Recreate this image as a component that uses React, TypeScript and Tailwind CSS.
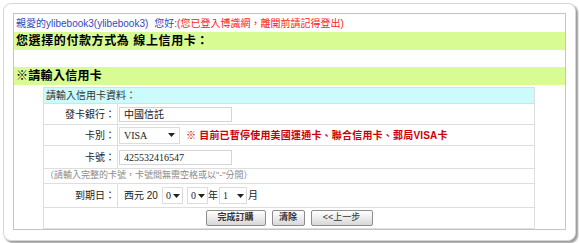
import React from 'react';

const font = { fontFamily: '"Liberation Sans", "Noto Sans CJK TC", sans-serif' };

function Arrow() {
  return (
    <svg width="7" height="4" viewBox="0 0 7 4" className="shrink-0">
      <path d="M0 0 H7 L3.5 4 Z" fill="#222" />
    </svg>
  );
}

function SmallSelect({ value, w }: { value: string; w: string }) {
  return (
    <div className={`${w} h-[17px] border border-[#dcdcdc] bg-white flex items-center justify-between pl-[3px] pr-[2px]`}>
      <span className="text-[10px] text-[#222] font-['Liberation_Serif',serif]">{value}</span>
      <Arrow />
    </div>
  );
}

function Row({ label, h, children }: { label: string; h: string; children: React.ReactNode }) {
  return (
    <div className={`flex ${h} border-b border-[#dedede]`}>
      <div className="w-[74px] shrink-0 flex items-center justify-end pr-[2px] border-r border-[#dedede] text-[10px] text-[#222]">
        {label}
      </div>
      <div className="flex-1 flex items-center pl-[1px]">{children}</div>
    </div>
  );
}

export default function App() {
  return (
    <div className="p-[3px] bg-white" style={font}>
      <div className="w-[573px] h-[238px] rounded-[8px] border border-[#d6d6d6] bg-white shadow-[2px_2px_2px_rgba(0,0,0,0.4)] p-[9px]">
        <div className="w-[553px] h-[217px] border border-[#c4c4c4]">
          <div className="h-[18px] flex items-center pl-[2px] text-[10px]">
            <span className="text-[#3448b8]">親愛的ylibebook3(ylibebook3)</span>
            <span className="text-[#3448b8] ml-[6px]">您好:</span>
            <span className="text-[#ff2020]">(您已登入博識網，離開前請記得登出)</span>
          </div>
          <div className="h-[18px] bg-[#d8fb94] flex items-center pl-[2px] text-[12px] font-bold tracking-[0.6px] text-black">
            您選擇的付款方式為 線上信用卡：
          </div>
          <div className="h-[17px]" />
          <div className="h-[18px] bg-[#d8fb94] flex items-center pl-[2px] text-[12px] font-bold tracking-[0.3px] text-black">
            ※請輸入信用卡
          </div>
          <div className="ml-[29px] mt-[2px] w-[492px] border-x border-t border-[#dedede]">
            <div className="h-[16px] bg-[#ccfbfb] border-b border-[#dedede] flex items-center pl-[2px] text-[10px] text-[#333]">
              請輸入信用卡資料：
            </div>
            <Row label="發卡銀行：" h="h-[21px]">
              <div className="w-[113px] h-[15px] border border-[#d4d4d4] flex items-center pl-[4px] text-[10px] text-[#222]">
                中國信託
              </div>
            </Row>
            <Row label="卡別：" h="h-[21px]">
              <div className="w-[61px] h-[17px] border border-[#dcdcdc] flex items-center justify-between pl-[4px] pr-[4px]">
                <span className="text-[10px] text-[#222] font-['Liberation_Serif',serif]">VISA</span>
                <Arrow />
              </div>
              <span className="ml-[6px] text-[10px] font-bold text-[#cc0000] tracking-[0.2px]">
                ※ 目前已暫停使用美國運通卡、聯合信用卡、郵局VISA卡
              </span>
            </Row>
            <Row label="卡號：" h="h-[23px]">
              <div className="w-[113px] h-[15px] border border-[#d4d4d4] flex items-center pl-[4px] text-[10px] text-[#222] font-['Liberation_Serif',serif]">
                425532416547
              </div>
            </Row>
            <div className="h-[15px] border-b border-[#dedede] flex items-center pl-[1px] text-[9px] text-[#8a8a8a]">
              （請輸入完整的卡號，卡號間無需空格或以"-"分開）
            </div>
            <Row label="到期日：" h="h-[24px]">
              <span className="ml-[5px] text-[10px] text-[#222]">西元 20</span>
              <div className="ml-[4px]"><SmallSelect value="0" w="w-[21px]" /></div>
              <div className="ml-[4px]"><SmallSelect value="0" w="w-[21px]" /></div>
              <span className="text-[10px] text-[#222]">年</span>
              <div className="ml-[1px]"><SmallSelect value="1" w="w-[28px]" /></div>
              <span className="ml-[1px] text-[10px] text-[#222]">月</span>
            </Row>
            <div className="h-[21px] border-b border-[#dedede] flex items-center justify-center gap-[6px]">
              <button className="w-[60px] h-[16px] border border-[#8c8c8c] rounded-[2px] bg-gradient-to-b from-white to-[#d8d8d8] text-[9px] font-bold text-[#333]">
                完成訂購
              </button>
              <button className="w-[33px] h-[16px] border border-[#8c8c8c] rounded-[2px] bg-gradient-to-b from-white to-[#d8d8d8] text-[9px] font-bold text-[#333]">
                清除
              </button>
              <button className="w-[62px] h-[16px] border border-[#8c8c8c] rounded-[2px] bg-gradient-to-b from-white to-[#d8d8d8] text-[9px] text-[#333]">
                &lt;&lt;上一步
              </button>
            </div>
          </div>
        </div>
      </div>
    </div>
  );
}
